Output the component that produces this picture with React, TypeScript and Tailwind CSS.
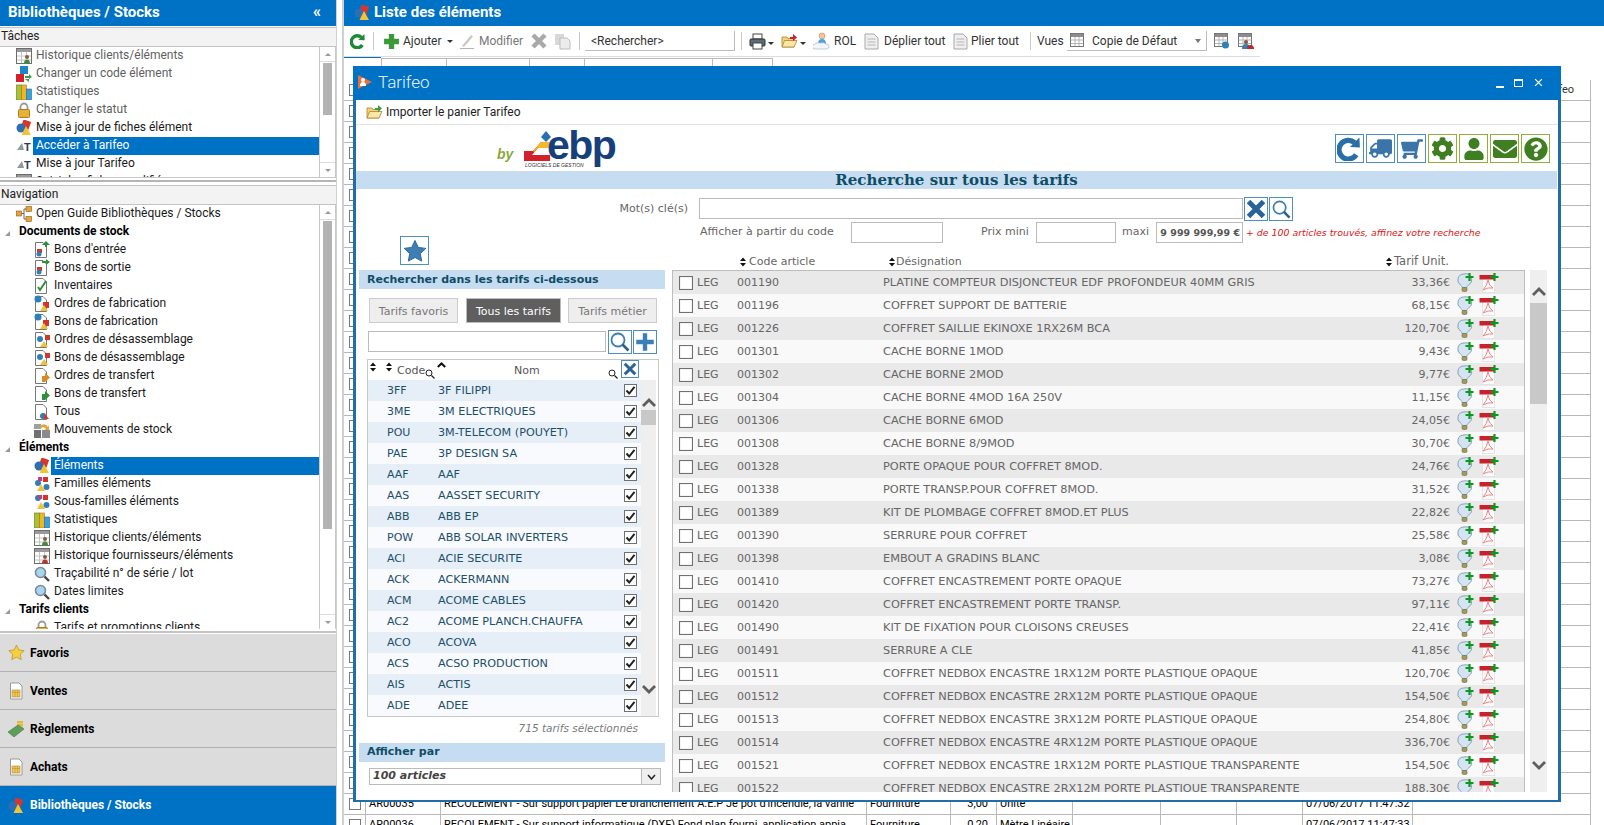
import type { ReactNode } from "react";
import { FaCog, FaEnvelope, FaQuestionCircle, FaShoppingCart, FaTruck, FaUser } from "react-icons/fa";

function ElementIcon({ size = 16 }: { size?: number }) {
  return (
    <svg width={size} height={size} viewBox="0 0 16 16" className="shrink-0">
      <rect x="6" y="0.500" width="8" height="8" fill="#d9352b" transform="rotate(20 10 4.500)" />
      <circle cx="5" cy="8" r="4.500" fill="#2f6fb0" />
      <path d="M10 6 L15 15 L5.500 15 Z" fill="#f4c430" />
    </svg>
  );
}

function TableIcon({ person = "#3c8c3c" }: { person?: string }) {
  return (
    <svg width="16" height="16" viewBox="0 0 16 16" className="shrink-0">
      <rect x="0.500" y="0.500" width="15" height="15" fill="#fff" stroke="#6d6d6d" />
      <rect x="1" y="1" width="14" height="3" fill="#9a9a9a" />
      <path d="M1 8h14M1 12h14M5.500 4v11M10.500 4v4" stroke="#c4c4c4" />
      <circle cx="11" cy="9" r="2" fill="#8a5a3c" />
      <path d="M8 15.500 q0-4 3-4 t3 4z" fill={person} />
    </svg>
  );
}

function CodeIcon() {
  return (
    <svg width="16" height="16" viewBox="0 0 16 16" className="shrink-0">
      <rect x="4" y="0" width="8" height="8" fill="#1b87c9" />
      <rect x="0" y="8" width="8" height="8" fill="#d3202a" />
      <path d="M9 10h4V8l3 3-3 2v-1H9zM9 13h4v3" fill="#3a9d4a" />
    </svg>
  );
}

function StatsIcon() {
  return (
    <svg width="16" height="16" viewBox="0 0 16 16" className="shrink-0">
      <rect x="0.500" y="1" width="5" height="15" fill="#a8c232" stroke="#5b7a1e" strokeWidth="0.600" />
      <rect x="5.500" y="1" width="5" height="15" fill="#f0b429" stroke="#a87a12" strokeWidth="0.600" />
      <rect x="10.500" y="5" width="5" height="11" fill="#3aa0d8" stroke="#1f6fa0" strokeWidth="0.600" />
    </svg>
  );
}

function LockIcon() {
  return (
    <svg width="16" height="16" viewBox="0 0 16 16" className="shrink-0">
      <path d="M4.500 8V5a3.500 3.500 0 0 1 7 0v3" fill="none" stroke="#9a9a9a" strokeWidth="1.800" />
      <rect x="2.500" y="7.500" width="11" height="8" rx="1" fill="#e8b23a" stroke="#a97c1c" />
    </svg>
  );
}

function TarifeoMini() {
  return (
    <svg width="16" height="14" viewBox="0 0 16 14" className="shrink-0">
      <path d="M1 11 L6 4 L8 11 Z" fill="#8d9aa3" />
      <text x="8" y="12" fontSize="11" fontWeight="700" fontFamily="'Liberation Sans', sans-serif" fill="#2d3e50">T</text>
    </svg>
  );
}

function GuideIcon() {
  return (
    <svg width="16" height="16" viewBox="0 0 16 16" className="shrink-0">
      <rect x="0.500" y="5" width="5" height="5" fill="#e9a33a" stroke="#8a5d12" strokeWidth="0.600" />
      <rect x="10" y="0.500" width="5.500" height="5" fill="#e9a33a" stroke="#8a5d12" strokeWidth="0.600" />
      <rect x="10" y="10.500" width="5.500" height="5" fill="#e9a33a" stroke="#8a5d12" strokeWidth="0.600" />
      <path d="M5.500 7.500H8M8 3v10M8 3h2M8 13h2" stroke="#666" fill="none" />
    </svg>
  );
}

function DocIcon({ kind }: { kind: string }) {
  return (
    <svg width="16" height="18" viewBox="0 0 16 18" className="shrink-0">
      <path d="M1.500 1.500H9L12.500 5V16.500H1.500Z" fill="#fff" stroke="#777" />
      {kind === "in" && <path d="M8 4 L12 0 L16 4 H13 V6 H11 V4 Z" fill="#2f8f3a" />}
      {kind === "out" && <path d="M8 2h4V0l4 3-4 3V4H8z" fill="#2f8f3a" />}
      {kind === "check" && <path d="M4 10l2 3 6-9" fill="none" stroke="#2f8f3a" strokeWidth="2" />}
      {kind === "fab" && <circle cx="4" cy="4" r="3.500" fill="#2f7fb8" />}
      {kind === "fab" && <rect x="9" y="7" width="6" height="6" fill="#d3352b" />}
      {kind === "dis" && <circle cx="6" cy="8" r="3" fill="#2f7fb8" />}
      {kind === "dis" && <rect x="11" y="4" width="5" height="5" fill="#d3352b" />}
      {(kind === "fab" || kind === "dis") && <path d="M10 10l4 6H6z" fill="#f0c23a" />}
      {kind === "tr" && <path d="M8 15V9h3V6l5 4.500-5 4.500z" fill="#d98a22" />}
      {kind === "tr2" && <path d="M8 15V9h3V6l5 4.500-5 4.500z" fill="#2f8f3a" />}
      {kind === "all" && <circle cx="9" cy="13" r="3" fill="#2f7fb8" />}
      {kind === "all" && <path d="M10 10l5 6h-5z" fill="#d3352b" />}
      {(kind === "in" || kind === "out") && <rect x="3" y="8" width="5" height="4" fill="#d3352b" />}
      {(kind === "in" || kind === "out") && <circle cx="5" cy="13" r="2.500" fill="#2f7fb8" />}
    </svg>
  );
}

function MoveIcon() {
  return (
    <svg width="16" height="16" viewBox="0 0 16 16" className="shrink-0">
      <rect x="0" y="8" width="7" height="8" fill="#707070" />
      <rect x="8" y="8" width="8" height="8" fill="#8b8b8b" />
      <rect x="0" y="2" width="7" height="5" fill="#a0a0a0" />
      <path d="M6 4q5-4 8 1l1-2v5h-5l2-1q-2-3-5-1z" fill="#e3a63a" />
    </svg>
  );
}

function FamilyIcon({ sub = false }: { sub?: boolean }) {
  return (
    <svg width="16" height="16" viewBox="0 0 16 16" className="shrink-0">
      <rect x="9" y="1" width="5" height="5" fill="#d3352b" />
      <circle cx="4" cy={sub ? 4 : 7} r="3" fill="#2f7fb8" />
      <rect x="4" y="1" width="4" height="4" fill="#c03b88" />
      <path d="M7 8l4 7H3z" fill="#f0c23a" />
      <circle cx="12.500" cy="11" r="3" fill="#2f7fb8" />
    </svg>
  );
}

function LensIcon() {
  return (
    <svg width="16" height="16" viewBox="0 0 16 16" className="shrink-0">
      <circle cx="6.500" cy="6.500" r="5" fill="#a8d6f2" stroke="#7b8a96" strokeWidth="1.600" />
      <path d="M10.500 10.500 L15 15" stroke="#444" strokeWidth="2.400" />
    </svg>
  );
}

function StarIcon({ size = 16, fill = "#f6cf3f", stroke = "#b98f1c" }: { size?: number; fill?: string; stroke?: string }) {
  return (
    <svg width={size} height={size} viewBox="0 0 24 24" className="shrink-0">
      <path d="M12 1.500l3.300 6.900 7.500 1-5.500 5.200 1.400 7.500L12 18.500l-6.700 3.600 1.400-7.500L1.200 9.400l7.500-1z" fill={fill} stroke={stroke} />
    </svg>
  );
}

function SheetIcon() {
  return (
    <svg width="14" height="18" viewBox="0 0 14 18" className="shrink-0">
      <path d="M1.500 1H10L13 4V17H1.500Z" fill="#fff" stroke="#999" />
      <rect x="3" y="8" width="8" height="7" fill="#f1c75d" stroke="#b58a24" strokeWidth="0.600" />
      <path d="M3 10.500h8M6 8v7M8.500 8v7" stroke="#b58a24" strokeWidth="0.500" />
    </svg>
  );
}

function MoneyIcon() {
  return (
    <svg width="17" height="17" viewBox="0 0 17 17" className="shrink-0">
      <rect x="9" y="1" width="6" height="2.500" fill="#e6b93a" />
      <rect x="9" y="4" width="6" height="2.500" fill="#e6b93a" />
      <rect x="9" y="7" width="6" height="2.500" fill="#e6b93a" />
      <path d="M0 12l10-7 6 4-10 8z" fill="#5f9e5a" stroke="#3d7a3c" strokeWidth="0.600" />
    </svg>
  );
}

function FolderIcon({ badge = "#3a9d4a" }: { badge?: string }) {
  return (
    <svg width="17" height="16" viewBox="0 0 17 16" className="shrink-0">
      <path d="M1 4h5l1 1.500h6V14H1z" fill="#f3d27a" stroke="#a9852e" strokeWidth="0.800" />
      <path d="M1 14 L3.500 7.500H16L13 14Z" fill="#fae6a5" stroke="#a9852e" strokeWidth="0.800" />
      <path d="M9 4h3V1l4 3.500L12 8V6H9z" fill={badge} />
    </svg>
  );
}

function RefreshIcon({ size = 16, color = "#2e8b3a", width = 4 }: { size?: number; color?: string; width?: number }) {
  return (
    <svg width={size} height={size} viewBox="0 0 24 24" className="shrink-0">
      <path d="M17 6.500A9 9 0 1 0 18.500 18" fill="none" stroke={color} strokeWidth={width} />
      <path d="M12.500 10.500 L22 11 L21.500 1.500 Z" fill={color} />
    </svg>
  );
}

function PlusIcon({ size = 16, color = "#3a9a3a", width = 5 }: { size?: number; color?: string; width?: number }) {
  return (
    <svg width={size} height={size} viewBox="0 0 16 16" className="shrink-0">
      <path d="M8 1v14M1 8h14" stroke={color} strokeWidth={width} />
    </svg>
  );
}

function CrossIcon({ size = 16, color = "#a9a9a9", width = 4.500 }: { size?: number; color?: string; width?: number }) {
  return (
    <svg width={size} height={size} viewBox="0 0 16 16" className="shrink-0">
      <path d="M2 2l12 12M14 2L2 14" stroke={color} strokeWidth={width} />
    </svg>
  );
}

function SearchBlue({ size = 20 }: { size?: number }) {
  return (
    <svg width={size} height={size} viewBox="0 0 20 20" className="shrink-0">
      <circle cx="8" cy="8" r="6.500" fill="#fff" stroke="#3a7fb0" strokeWidth="1.800" />
      <path d="M12.500 12.500L18.500 18.500" stroke="#2a5f88" strokeWidth="2.600" />
    </svg>
  );
}

function SmallLens() {
  return (
    <svg width="10" height="10" viewBox="0 0 10 10" className="shrink-0">
      <circle cx="4" cy="4" r="3" fill="none" stroke="#222" />
      <path d="M6.500 6.500L9.500 9.500" stroke="#222" strokeWidth="1.200" />
    </svg>
  );
}

function SortIcon() {
  return (
    <svg width="6" height="10" viewBox="0 0 6 10" className="shrink-0">
      <path d="M3 0.500L6 4H0ZM3 9.500L0 6H6Z" fill="#111" />
    </svg>
  );
}

function Chevron({ up = false }: { up?: boolean }) {
  return (
    <svg width="14" height="9" viewBox="0 0 14 9">
      <path d={up ? "M1 8L7 2L13 8" : "M1 1L7 7L13 1"} fill="none" stroke="#5e5e5e" strokeWidth="2.800" />
    </svg>
  );
}

function Caret() {
  return <span className="inline-block w-0 h-0 border-x-[3px] border-x-transparent border-t-[3px] border-t-[#333]" />;
}

function Check({ on = true, size = 13 }: { on?: boolean; size?: number }) {
  return (
    <svg width={size} height={size} viewBox="0 0 13 13" className="shrink-0">
      <rect x="0.500" y="0.500" width="12" height="12" fill="#fff" stroke="#707070" />
      {on && <path d="M2.500 6.500L5.200 9.500L10.500 2.800" fill="none" stroke="#222" strokeWidth="2" />}
    </svg>
  );
}

function BulbAdd() {
  return (
    <svg width="18" height="20" viewBox="0 0 18 20" className="shrink-0">
      <path d="M7 1a6 6 0 0 0-3.500 11c1 .8 1.500 1.500 1.500 2.500h5c0-1 .5-1.700 1.500-2.500A6 6 0 0 0 7 1z" fill="#d5e4f2" stroke="#8aa2b8" />
      <rect x="5" y="14.500" width="5" height="4" rx="1.500" fill="#a39a5c" stroke="#6d6a3a" strokeWidth="0.600" />
      <path d="M12.500 0v8M8.500 4h8" stroke="#0a9a1e" strokeWidth="2.200" />
    </svg>
  );
}

function PdfAdd() {
  return (
    <svg width="20" height="20" viewBox="0 0 20 20" className="shrink-0">
      <rect x="3.500" y="3" width="12" height="16.500" fill="#fbfbfb" stroke="#e4e4e4" />
      <rect x="0.500" y="2" width="15" height="4.500" fill="#c8202c" />
      <path d="M9 7q-1 6-5 10q5-3 10-2q-4-2-5-8z" fill="none" stroke="#e58a88" strokeWidth="1" />
      <path d="M15.500 0v8M11.500 4h8" stroke="#0a9a1e" strokeWidth="2.200" />
    </svg>
  );
}

function SideScroll({ thumbTop, thumbHeight }: { thumbTop: number; thumbHeight: number }) {
  return (
    <div className="w-[17px] shrink-0 h-full flex flex-col justify-between border-x border-[#c8c8c8] bg-white relative">
      <div className="h-[15px] border-b border-[#dcdcdc] flex items-center justify-center">
        <span className="w-0 h-0 border-x-[3px] border-x-transparent border-b-[3px] border-b-[#999]" />
      </div>
      <div className="absolute left-[3px] w-[9px] bg-[#b3b3b3]" style={{ top: thumbTop, height: thumbHeight }} />
      <div className="h-[15px] border-t border-[#dcdcdc] flex items-center justify-center">
        <span className="w-0 h-0 border-x-[3px] border-x-transparent border-t-[3px] border-t-[#999]" />
      </div>
    </div>
  );
}

type SideRow = { label: string; icon?: ReactNode; kind: "top" | "group" | "child"; sel?: boolean; muted?: boolean };

function SideLine({ row }: { row: SideRow }) {
  if (row.kind === "group") {
    return (
      <div className="h-[18px] flex items-center pl-[5px] shrink-0">
        <span className="w-0 h-0 border-l-[5px] border-l-transparent border-b-[5px] border-b-[#999] mt-[3px]" />
        <span className="ml-[9px] pb-[2px] font-bold text-[12px] text-black">{row.label}</span>
      </div>
    );
  }
  const pad = row.kind === "top" ? "pl-[16px]" : "pl-[34px]";
  return (
    <div className={"h-[18px] flex items-center shrink-0 " + pad}>
      <span className="w-[16px] h-[18px] flex items-center justify-center shrink-0 overflow-hidden">{row.icon}</span>
      {row.sel ? (
        <span className="ml-[1px] pl-[3px] flex-1 h-[18px] leading-[17px] bg-[#0072c6] text-white">{row.label}</span>
      ) : (
        <span className={row.muted ? "ml-[4px] pb-[2px] text-[#5f5f5f]" : "ml-[4px] pb-[2px] text-[#1a1a1a]"}>{row.label}</span>
      )}
    </div>
  );
}

const tasks: SideRow[] = [
  { label: "Historique clients/éléments", icon: <TableIcon />, kind: "top", muted: true },
  { label: "Changer un code élément", icon: <CodeIcon />, kind: "top", muted: true },
  { label: "Statistiques", icon: <StatsIcon />, kind: "top", muted: true },
  { label: "Changer le statut", icon: <LockIcon />, kind: "top", muted: true },
  { label: "Mise à jour de fiches élément", icon: <ElementIcon />, kind: "top" },
  { label: "Accéder à Tarifeo", icon: <TarifeoMini />, kind: "top", sel: true },
  { label: "Mise à jour Tarifeo", icon: <TarifeoMini />, kind: "top" },
  { label: "Suivi des fiches modifiées", icon: <TableIcon />, kind: "top" },
];

const nav: SideRow[] = [
  { label: "Open Guide Bibliothèques / Stocks", icon: <GuideIcon />, kind: "top" },
  { label: "Documents de stock", kind: "group" },
  { label: "Bons d'entrée", icon: <DocIcon kind="in" />, kind: "child" },
  { label: "Bons de sortie", icon: <DocIcon kind="out" />, kind: "child" },
  { label: "Inventaires", icon: <DocIcon kind="check" />, kind: "child" },
  { label: "Ordres de fabrication", icon: <DocIcon kind="fab" />, kind: "child" },
  { label: "Bons de fabrication", icon: <DocIcon kind="fab" />, kind: "child" },
  { label: "Ordres de désassemblage", icon: <DocIcon kind="dis" />, kind: "child" },
  { label: "Bons de désassemblage", icon: <DocIcon kind="dis" />, kind: "child" },
  { label: "Ordres de transfert", icon: <DocIcon kind="tr" />, kind: "child" },
  { label: "Bons de transfert", icon: <DocIcon kind="tr2" />, kind: "child" },
  { label: "Tous", icon: <DocIcon kind="all" />, kind: "child" },
  { label: "Mouvements de stock", icon: <MoveIcon />, kind: "child" },
  { label: "Éléments", kind: "group" },
  { label: "Éléments", icon: <ElementIcon />, kind: "child", sel: true },
  { label: "Familles éléments", icon: <FamilyIcon />, kind: "child" },
  { label: "Sous-familles éléments", icon: <FamilyIcon sub />, kind: "child" },
  { label: "Statistiques", icon: <StatsIcon />, kind: "child" },
  { label: "Historique clients/éléments", icon: <TableIcon />, kind: "child" },
  { label: "Historique fournisseurs/éléments", icon: <TableIcon person="#b5352b" />, kind: "child" },
  { label: "Traçabilité n° de série / lot", icon: <LensIcon />, kind: "child" },
  { label: "Dates limites", icon: <LensIcon />, kind: "child" },
  { label: "Tarifs clients", kind: "group" },
  { label: "Tarifs et promotions clients", icon: <LockIcon />, kind: "child" },
];

function Sidebar() {
  const bottom = [
    { label: "Favoris", icon: <StarIcon size={17} /> },
    { label: "Ventes", icon: <SheetIcon /> },
    { label: "Règlements", icon: <MoneyIcon /> },
    { label: "Achats", icon: <SheetIcon /> },
  ];
  return (
    <div className="w-[336px] shrink-0 h-full flex flex-col bg-white">
      <div className="h-[26px] bg-[#0072c6] text-white flex items-center justify-between pl-[8px] pr-[16px] pb-[2px] shrink-0">
        <span className="font-bold text-[15px]">Bibliothèques / Stocks</span>
        <span className="font-bold text-[16px] leading-none tracking-[-1px]">«</span>
      </div>
      <div className="h-[20px] mt-px bg-[#f3f3f3] border-y border-[#c4c4c4] pl-px leading-[16px] shrink-0 text-[#222]">Tâches</div>
      <div className="h-[131px] flex shrink-0 border-b border-[#c8c8c8]">
        <div className="flex-1 flex flex-col overflow-hidden">
          {tasks.map((r) => (
            <SideLine key={r.label} row={r} />
          ))}
        </div>
        <SideScroll thumbTop={16} thumbHeight={52} />
      </div>
      <div className="h-[2px] mt-[2px] bg-[#b5b5b5] shrink-0" />
      <div className="h-[20px] mt-[3px] bg-[#f3f3f3] border-y border-[#c4c4c4] pl-px leading-[16px] shrink-0 text-[#222]">Navigation</div>
      <div className="h-[424px] flex shrink-0">
        <div className="flex-1 flex flex-col overflow-hidden">
          {nav.map((r, i) => (
            <SideLine key={r.label + i} row={r} />
          ))}
        </div>
        <SideScroll thumbTop={16} thumbHeight={308} />
      </div>
      <div className="h-[2px] mt-[2px] bg-[#c4c4c4] shrink-0" />
      <div className="h-px shrink-0" />
      {bottom.map((b) => (
        <div key={b.label} className="h-[38px] bg-[#dcdcdc] border-b border-[#b2b2b2] flex items-center shrink-0">
          <span className="w-[30px] flex justify-center pl-[2px]">{b.icon}</span>
          <span className="font-bold text-[12px] text-black">{b.label}</span>
        </div>
      ))}
      <div className="flex-1 bg-[#0072c6] flex items-center">
        <span className="w-[30px] flex justify-center pl-[2px]">
          <ElementIcon />
        </span>
        <span className="font-bold text-[12px] text-white pb-[2px]">Bibliothèques / Stocks</span>
      </div>
    </div>
  );
}

function ToolSep({ ml }: { ml: string }) {
  return <span className={"w-px h-[18px] bg-[#c8c8c8] shrink-0 " + ml} />;
}

function PageIcon() {
  return (
    <svg width="15" height="17" viewBox="0 0 15 17" className="shrink-0">
      <path d="M1 1H10L14 5V16H1Z" fill="#efefef" stroke="#a8a8a8" />
      <path d="M3.500 6h8M3.500 9h8M3.500 12h8" stroke="#b5b5b5" />
    </svg>
  );
}

function PrinterIcon() {
  return (
    <svg width="17" height="17" viewBox="0 0 17 17" className="shrink-0">
      <rect x="4" y="1" width="9" height="5" fill="#fff" stroke="#444" />
      <rect x="1" y="6" width="15" height="7" rx="1" fill="#5b6b78" stroke="#333" />
      <rect x="4" y="10" width="9" height="6" fill="#fff" stroke="#444" />
    </svg>
  );
}

function UserCloud() {
  return (
    <svg width="17" height="18" viewBox="0 0 17 18" className="shrink-0">
      <circle cx="9" cy="4" r="3" fill="#f0c7a0" stroke="#b98a5c" strokeWidth="0.600" />
      <path d="M5 12q0-5 4-5t4 5z" fill="#4aa3df" />
      <path d="M2 17a2.500 2.500 0 0 1 0-5q2-2 5-1 4-1 6 1a2.500 2.500 0 0 1 1 5z" fill="#f2f6fa" stroke="#a9b9c6" strokeWidth="0.700" />
    </svg>
  );
}

function GridMini({ children }: { children?: ReactNode }) {
  return (
    <svg width="16" height="16" viewBox="0 0 16 16" className="shrink-0">
      <rect x="0.500" y="0.500" width="13" height="13" fill="#fff" stroke="#777" />
      <rect x="1" y="1" width="12" height="3" fill="#8d8d8d" />
      <path d="M1 7h12M1 10.500h12M5 4v9M9 4v9" stroke="#b5b5b5" />
      {children}
    </svg>
  );
}

function Toolbar() {
  return (
    <div className="h-[30px] flex items-center shrink-0 text-[#333]">
      <span className="ml-[6px] w-[18px] shrink-0">
        <RefreshIcon size={16} width={5} color="#1d8a38" />
      </span>
      <ToolSep ml="ml-[5px]" />
      <span className="ml-[9px] w-[17px] shrink-0">
        <PlusIcon size={17} />
      </span>
      <span className="ml-[3px] w-[44px] shrink-0">Ajouter</span>
      <Caret />
      <span className="ml-[6px] w-[16px] shrink-0">
        <svg width="16" height="16" viewBox="0 0 16 16">
          <path d="M3 13L12 2l2 1.500L5 14z" fill="#c9c9c9" />
          <path d="M1 15.500h14" stroke="#b5b5b5" />
        </svg>
      </span>
      <span className="ml-[4px] w-[48px] shrink-0 text-[#777]">Modifier</span>
      <span className="ml-[4px] w-[16px] shrink-0">
        <CrossIcon />
      </span>
      <span className="ml-[7px] w-[17px] shrink-0">
        <svg width="17" height="17" viewBox="0 0 17 17">
          <rect x="1" y="1" width="9" height="11" fill="#d8d8d8" />
          <path d="M6 5h7l3 3v8H6z" fill="#ececec" stroke="#bcbcbc" />
        </svg>
      </span>
      <ToolSep ml="ml-[8px]" />
      <div className="ml-[5px] w-[150px] h-[20px] border-b border-r border-[#bdbdbd] pl-[6px] leading-[20px] shrink-0">&lt;Rechercher&gt;</div>
      <ToolSep ml="ml-[6px]" />
      <span className="ml-[7px] w-[17px] shrink-0">
        <PrinterIcon />
      </span>
      <span className="ml-[2px]">
        <Caret />
      </span>
      <span className="ml-[7px] w-[16px] shrink-0">
        <FolderIcon badge="#d3202a" />
      </span>
      <span className="ml-[3px]">
        <Caret />
      </span>
      <span className="ml-[7px] w-[17px] shrink-0">
        <UserCloud />
      </span>
      <span className="ml-[4px] w-[26px] shrink-0">ROL</span>
      <span className="ml-[4px] w-[15px] shrink-0">
        <PageIcon />
      </span>
      <span className="ml-[5px] w-[69px] shrink-0">Déplier tout</span>
      <span className="w-[15px] shrink-0">
        <PageIcon />
      </span>
      <span className="ml-[3px] w-[52px] shrink-0">Plier tout</span>
      <ToolSep ml="ml-[7px]" />
      <span className="ml-[6px] w-[26px] shrink-0">Vues</span>
      <div className="ml-[4px] w-[140px] h-[20px] border-b border-r border-[#bdbdbd] flex items-center pl-[3px] pr-[5px] shrink-0">
        <GridMini />
        <span className="ml-[6px] flex-1">Copie de Défaut</span>
        <span className="w-0 h-0 border-x-[3px] border-x-transparent border-t-[4px] border-t-[#777]" />
      </div>
      <span className="ml-[7px] w-[16px] shrink-0">
        <GridMini>
          <circle cx="11.500" cy="12" r="3.500" fill="#2f7fb8" />
        </GridMini>
      </span>
      <span className="ml-[8px] w-[16px] shrink-0">
        <GridMini>
          <circle cx="8" cy="9" r="2" fill="#8a5a3c" />
          <path d="M4 16q0-5 4-5t4 5z" fill="#2f7fb8" />
          <path d="M9 16q0-4 3.500-4t3.500 4z" fill="#c0282c" />
        </GridMini>
      </span>
    </div>
  );
}

const gridWidths = [22, 75, 426, 84, 46, 76, 88, 76, 66, 110, 178];

function BackRow({ cells, top = false }: { cells?: string[]; top?: boolean }) {
  return (
    <div className={"h-[21px] w-[1247px] flex border-b border-[#b9b9b9] shrink-0 text-[11px] " + (top ? "text-[#333]" : "text-black")}>
      {gridWidths.map((w, i) => (
        <div key={i} className="h-full border-r border-[#b9b9b9] overflow-hidden whitespace-nowrap flex items-center shrink-0 box-border pl-[3px] pr-[1px]" style={{ width: w }}>
          {i === 0 && (
            <span className="ml-[2px]">
              <Check on={false} size={12} />
            </span>
          )}
          {cells && i > 0 && (
            <span className={i === 4 ? "w-full text-right pr-[7px]" : i === 10 ? "w-full text-right pr-[15px]" : ""}>{cells[i - 1]}</span>
          )}
        </div>
      ))}
    </div>
  );
}

function BackGrid() {
  const rows = Array.from({ length: 33 });
  return (
    <div className="flex-1 overflow-hidden relative">
      <div className="h-[1px] mt-[1px] w-[37px] bg-[#0072c6]" />
      <div className="h-[22px] flex pl-[37px]">
        {[66, 83, 55, 128, 60].map((w) => (
          <div key={w} className="h-full border border-l-0 first:border-l border-[#b9b9b9]" style={{ width: w }} />
        ))}
      </div>
      <BackRow cells={["", "", "", "", "", "", "", "", "", "Tarifeo"]} top />
      {rows.map((_, i) => (
        <BackRow key={i} />
      ))}
      <BackRow cells={["AR00035", "RECOLEMENT - Sur support papier Le branchement A.E.P Je pot d'incendie, la vanne", "Fourniture", "3,00", "Unité", "", "", "", "07/06/2017 11:47:32", ""]} />
      <BackRow cells={["AR00036", "RECOLEMENT - Sur support informatique (DXF) Fond plan fourni, application appia", "Fourniture", "0,20", "Mètre Linéaire", "", "", "", "07/06/2017 11:47:33", ""]} />
    </div>
  );
}

function IconBtn({ green = false, children }: { green?: boolean; children: ReactNode }) {
  return (
    <div className={green ? "w-[29px] h-[29px] border border-[#8fae3a] flex items-center justify-center" : "w-[29px] h-[29px] border border-[#4f8fbc] flex items-center justify-center"}>
      {children}
    </div>
  );
}

function EbpLogo() {
  return (
    <svg width="94" height="38" viewBox="0 0 94 38" className="shrink-0">
      <path d="M0 21 L9 21 L17 12 L26 12 L26 18 L14 18 L8 25 L26 25 L26 31 L0 31 Z" fill="#d3202a" />
      <path d="M9 21 L17 12 L26 12 L26 18 L14 18 L10 22 Z" fill="#f4b92a" />
      <path d="M22 1 L27 7 L22 12 L17 7 Z" fill="#2a6fb0" />
      <text x="23" y="29" fontFamily="'Liberation Sans', sans-serif" fontWeight="700" fontSize="41" letterSpacing="-1.500" fill="#173f7c">ebp</text>
      <text x="1" y="37" fontFamily="'Liberation Sans', sans-serif" fontStyle="italic" fontSize="5" fill="#333">LOGICIELS DE GESTION</text>
    </svg>
  );
}

const items = [
  ["001190", "PLATINE COMPTEUR DISJONCTEUR EDF PROFONDEUR 40MM GRIS", "33,36€"],
  ["001196", "COFFRET SUPPORT DE BATTERIE", "68,15€"],
  ["001226", "COFFRET SAILLIE EKINOXE 1RX26M BCA", "120,70€"],
  ["001301", "CACHE BORNE 1MOD", "9,43€"],
  ["001302", "CACHE BORNE 2MOD", "9,77€"],
  ["001304", "CACHE BORNE 4MOD 16A 250V", "11,15€"],
  ["001306", "CACHE BORNE 6MOD", "24,05€"],
  ["001308", "CACHE BORNE 8/9MOD", "30,70€"],
  ["001328", "PORTE OPAQUE POUR COFFRET 8MOD.", "24,76€"],
  ["001338", "PORTE TRANSP.POUR COFFRET 8MOD.", "31,52€"],
  ["001389", "KIT DE PLOMBAGE COFFRET 8MOD.ET PLUS", "22,82€"],
  ["001390", "SERRURE POUR COFFRET", "25,58€"],
  ["001398", "EMBOUT A GRADINS BLANC", "3,08€"],
  ["001410", "COFFRET ENCASTREMENT PORTE OPAQUE", "73,27€"],
  ["001420", "COFFRET ENCASTREMENT PORTE TRANSP.", "97,11€"],
  ["001490", "KIT DE FIXATION POUR CLOISONS CREUSES", "22,41€"],
  ["001491", "SERRURE A CLE", "41,85€"],
  ["001511", "COFFRET NEDBOX ENCASTRE 1RX12M PORTE PLASTIQUE OPAQUE", "120,70€"],
  ["001512", "COFFRET NEDBOX ENCASTRE 2RX12M PORTE PLASTIQUE OPAQUE", "154,50€"],
  ["001513", "COFFRET NEDBOX ENCASTRE 3RX12M PORTE PLASTIQUE OPAQUE", "254,80€"],
  ["001514", "COFFRET NEDBOX ENCASTRE 4RX12M PORTE PLASTIQUE OPAQUE", "336,70€"],
  ["001521", "COFFRET NEDBOX ENCASTRE 1RX12M PORTE PLASTIQUE TRANSPARENTE", "154,50€"],
  ["001522", "COFFRET NEDBOX ENCASTRE 2RX12M PORTE PLASTIQUE TRANSPARENTE", "188,30€"],
];

const suppliers = [
  ["3FF", "3F FILIPPI"],
  ["3ME", "3M ELECTRIQUES"],
  ["POU", "3M-TELECOM (POUYET)"],
  ["PAE", "3P DESIGN SA"],
  ["AAF", "AAF"],
  ["AAS", "AASSET SECURITY"],
  ["ABB", "ABB EP"],
  ["POW", "ABB SOLAR INVERTERS"],
  ["ACI", "ACIE SECURITE"],
  ["ACK", "ACKERMANN"],
  ["ACM", "ACOME CABLES"],
  ["AC2", "ACOME PLANCH.CHAUFFA"],
  ["ACO", "ACOVA"],
  ["ACS", "ACSO PRODUCTION"],
  ["AIS", "ACTIS"],
  ["ADE", "ADEE"],
];

function LeftColumn() {
  return (
    <div className="w-[306px] ml-[3px] -mt-[7px] shrink-0 flex flex-col">
      <div className="ml-[41px] w-[29px] h-[29px] border border-[#4f8fbc] flex items-center justify-center">
        <StarIcon size={24} fill="#3f7db5" stroke="#2f6a9e" />
      </div>
      <div className="mt-[5px] h-[19px] bg-[#c6dcf0] pl-[8px] leading-[20px] font-bold text-[#0e4d68]">Rechercher dans les tarifs ci-dessous</div>
      <div className="mt-[9px] ml-[10px] flex text-center leading-[25px]">
        <div className="w-[89px] h-[25px] bg-[#eeeeee] border border-[#cccccc] text-[#777]">Tarifs favoris</div>
        <div className="ml-[8px] w-[95px] h-[25px] bg-[#5f5f5f] border border-[#bbbbbb] text-white">Tous les tarifs</div>
        <div className="ml-[7px] w-[89px] h-[25px] bg-[#eeeeee] border border-[#cccccc] text-[#777]">Tarifs métier</div>
      </div>
      <div className="mt-[7px] ml-[9px] flex">
        <div className="w-[238px] h-[21px] mt-px border border-[#bbbbbb]" />
        <div className="ml-[2px] w-[24px] h-[24px] border border-[#4f8fbc] flex items-center justify-center">
          <SearchBlue size={20} />
        </div>
        <div className="ml-px w-[24px] h-[24px] border border-[#4f8fbc] flex items-center justify-center">
          <PlusIcon size={20} color="#3a7fb5" width={3.500} />
        </div>
      </div>
      <div className="mt-[5px] ml-[8px] w-[292px] h-[358px] border border-[#c8c8c8] flex flex-col">
        <div className="h-[20px] flex items-start text-[#555] shrink-0">
          <span className="ml-[2px] mt-[2px]">
            <SortIcon />
          </span>
          <span className="ml-[10px] mt-[2px]">
            <SortIcon />
          </span>
          <span className="ml-[5px] mt-[3px] w-[28px]">Code</span>
          <span className="mt-[9px]">
            <SmallLens />
          </span>
          <svg width="9" height="6" viewBox="0 0 9 6" className="ml-[2px] mt-[2px]">
            <path d="M0.800 5L4.500 1.500L8.200 5" fill="none" stroke="#111" strokeWidth="2" />
          </svg>
          <span className="ml-[68px] mt-[3px] w-[94px]">Nom</span>
          <span className="mt-[9px]">
            <SmallLens />
          </span>
          <span className="ml-[3px] w-[18px] h-[18px] border border-[#4f8fbc] flex items-center justify-center">
            <CrossIcon size={14} color="#2a6496" width={3.500} />
          </span>
        </div>
        <div className="flex flex-1 pr-[2px] overflow-hidden">
          <div className="flex-1 flex flex-col text-[#1d4f68]">
            {suppliers.map(([c, n], i) => (
              <div key={c} className={i % 2 === 0 ? "h-[21px] flex items-center bg-[#e6eff8] shrink-0 pt-[2px]" : "h-[21px] flex items-center bg-[#f8fafd] shrink-0 pt-[2px]"}>
                <span className="ml-[19px] w-[51px]">{c}</span>
                <span className="flex-1 text-[11.200px]">{n}</span>
                <span className="mr-[4px] -mt-[2px]">
                  <Check />
                </span>
              </div>
            ))}
          </div>
          <div className="w-[15px] shrink-0 bg-[#efefef] flex flex-col items-center pt-[18px]">
            <Chevron up />
            <div className="w-[15px] h-[15px] mt-[3px] bg-[#c8c8c8]" />
            <div className="mt-[260px]">
              <Chevron />
            </div>
          </div>
        </div>
      </div>
      <div className="h-[20px] mt-px text-right pr-[27px] leading-[20px] text-[10.500px] italic text-[#7a7a7a]">715 tarifs sélectionnés</div>
      <div className="mt-[5px] h-[19px] bg-[#c6dcf0] pl-[8px] leading-[18px] font-bold text-[11px] text-[#0e4d68]">Afficher par</div>
      <div className="mt-[6px] ml-[10px] w-[292px] h-[17px] border border-[#bbbbbb] flex items-center">
        <span className="flex-1 pl-[3px] italic font-bold text-[#444]">100 articles</span>
        <span className="w-[19px] h-full bg-[#efefef] border-l border-[#bbbbbb] flex items-center justify-center">
          <svg width="9" height="6" viewBox="0 0 9 6">
            <path d="M1 1L4.500 5L8 1" fill="none" stroke="#222" strokeWidth="1.500" />
          </svg>
        </span>
      </div>
    </div>
  );
}

function RightColumn() {
  return (
    <div className="w-[875px] ml-[7px] shrink-0 flex flex-col">
      <div className="h-[27px] flex items-end text-[#666] relative">
        <span className="ml-[68px] mb-[3px]">
          <SortIcon />
        </span>
        <span className="ml-[3px] w-[140px]">Code article</span>
        <span className="mb-[3px]">
          <SortIcon />
        </span>
        <span className="ml-px w-[490px]">Désignation</span>
        <span className="mb-[3px]">
          <SortIcon />
        </span>
        <span className="ml-[2px] text-[11.500px]">Tarif Unit.</span>
      </div>
      <div className="flex">
        <div className="w-[853px] h-[522px] border-x border-t border-[#bdbdbd] overflow-hidden shrink-0 text-[#666]">
          {items.map(([code, label, price], i) => (
            <div key={code} className={i % 2 === 0 ? "h-[23px] flex items-center bg-[#e9e9e9] pt-[2px]" : "h-[23px] flex items-center bg-[#f9f9f9] pt-[2px]"}>
              <span className="ml-[6px] -mt-[2px]">
                <Check on={false} size={14} />
              </span>
              <span className="ml-[4px] w-[40px]">LEG</span>
              <span className="w-[146px]">{code}</span>
              <span className="flex-1 whitespace-nowrap text-[11.300px]">{label}</span>
              <span className="text-right w-[60px] pr-[2px]">{price}</span>
              <span className="ml-[5px] -mt-[2px]">
                <BulbAdd />
              </span>
              <span className="ml-[4px] mr-[25px] -mt-[2px]">
                <PdfAdd />
              </span>
            </div>
          ))}
        </div>
        <div className="ml-[5px] w-[17px] h-[522px] bg-[#efefef] flex flex-col items-center pt-[17px] shrink-0">
          <Chevron up />
          <div className="w-[17px] h-[101px] mt-[7px] bg-[#c8c8c8]" />
          <div className="mt-[357px]">
            <Chevron />
          </div>
        </div>
      </div>
    </div>
  );
}

function Tarifeo() {
  return (
    <div className="absolute left-[9px] top-[66px] w-[1208px] h-[736px] flex flex-col z-10 bg-[#0072c6]">
      <div className="h-[34px] shrink-0 flex items-center text-white">
        <svg width="16" height="14" viewBox="0 0 16 14" className="ml-[4px] -mt-[2px] shrink-0">
          <path d="M1 0 L15 7 L1 14 Z" fill="#e8703a" />
          <circle cx="6" cy="5" r="2" fill="#fff" />
          <path d="M3 11q0-4 3-4t3 4z" fill="#fff" />
        </svg>
        <span className="ml-[5px] text-[17px] font-light flex-1 text-[#eaf4fb]">Tarifeo</span>
        <span className="w-[8px] h-[2px] bg-white mt-[8px]" />
        <span className="ml-[10px] w-[9px] h-[8px] border border-white border-t-2 -mt-[1px]" />
        <span className="ml-[11px] mr-[18px] -mt-[1px]">
          <CrossIcon size={9} color="#ffffff" width={2.200} />
        </span>
      </div>
      <div className="flex-1 bg-white border-x-[3px] border-b-[2px] border-[#1f6fa6] flex flex-col overflow-hidden text-[11px] font-['DejaVu_Sans',sans-serif] min-h-0">
        <div className="h-[25px] shrink-0 border-b border-[#e2e2e2] flex items-center pl-[10px] font-['Roboto',sans-serif] text-[12px] text-[#222]">
          <FolderIcon />
          <span className="ml-[3px]">Importer le panier Tarifeo</span>
        </div>
        <div className="h-[46px] shrink-0 flex items-start">
          <span className="ml-[141px] mt-[21px] font-['Liberation_Sans',sans-serif] italic font-bold text-[14px] leading-[16px] text-[#8aa83c]">by</span>
          <span className="ml-[11px] mt-[5px]">
            <EbpLogo />
          </span>
          <div className="ml-auto mr-[8px] mt-[9px] flex gap-[2px]">
            <IconBtn>
              <RefreshIcon size={25} color="#2a6ea6" width={5} />
            </IconBtn>
            <IconBtn>
              <FaTruck size={23} color="#3a74a8" className="-scale-x-100" />
            </IconBtn>
            <IconBtn>
              <FaShoppingCart size={22} color="#3a74a8" className="-scale-x-100" />
            </IconBtn>
            <IconBtn green>
              <FaCog size={23} color="#3f7f22" />
            </IconBtn>
            <IconBtn green>
              <FaUser size={22} color="#3f7f22" />
            </IconBtn>
            <IconBtn green>
              <FaEnvelope size={24} color="#3f7f22" />
            </IconBtn>
            <IconBtn green>
              <FaQuestionCircle size={24} color="#3f7f22" />
            </IconBtn>
          </div>
        </div>
        <div className="h-[18px] shrink-0 mr-px bg-[#c6dcf0] text-center font-['DejaVu_Serif',serif] font-bold text-[15px] leading-[18px] text-[#0e4d68]">Recherche sur tous les tarifs</div>
        <div className="h-[54px] shrink-0 text-[#666]">
          <div className="flex mt-[8px] h-[24px]">
            <span className="w-[332px] text-right leading-[23px]">Mot(s) clé(s)</span>
            <div className="ml-[11px] w-[544px] h-[21px] mt-px border border-[#bbbbbb]" />
            <div className="ml-[1px] w-[24px] h-[24px] border border-[#4f8fbc] flex items-center justify-center">
              <CrossIcon size={20} color="#2a6496" width={4} />
            </div>
            <div className="ml-[1px] w-[24px] h-[24px] border border-[#4f8fbc] flex items-center justify-center">
              <SearchBlue size={19} />
            </div>
          </div>
          <div className="flex h-[22px] items-center">
            <span className="ml-[344px] w-[151px]">Afficher à partir du code</span>
            <div className="w-[92px] h-[21px] border border-[#bbbbbb]" />
            <span className="ml-[38px] w-[55px]">Prix mini</span>
            <div className="w-[80px] h-[21px] border border-[#bbbbbb]" />
            <span className="ml-[6px] w-[34px]">maxi</span>
            <div className="w-[87px] h-[21px] border border-[#bbbbbb] text-right pr-[2px] text-[9.500px] font-bold leading-[19px] text-[#555] whitespace-nowrap">9 999 999,99 €</div>
            <span className="ml-[3px] mt-[2px] text-[9.400px] italic text-[#e01515] whitespace-nowrap">+ de 100 articles trouvés, affinez votre recherche</span>
          </div>
        </div>
        <div className="flex flex-1 min-h-0">
          <LeftColumn />
          <RightColumn />
        </div>
      </div>
    </div>
  );
}

export default function App() {
  return (
    <div className="w-[1604px] h-[825px] overflow-hidden flex bg-white font-['Roboto',sans-serif] text-[12px] leading-normal">
      <Sidebar />
      <div className="w-[8px] shrink-0 h-full border-l border-r-2 border-[#d0d0d0] bg-white" />
      <div className="flex-1 h-full flex flex-col relative min-w-0">
        <div className="h-[26px] bg-[#0072c6] flex items-center shrink-0 pl-[10px] text-white">
          <ElementIcon />
          <span className="ml-[4px] pb-[2px] font-bold text-[15px]">Liste des éléments</span>
        </div>
        <Toolbar />
        <BackGrid />
        <div className="absolute left-0 top-[56px] w-[916px] h-px bg-[#dddddd]" />
        <Tarifeo />
      </div>
    </div>
  );
}
